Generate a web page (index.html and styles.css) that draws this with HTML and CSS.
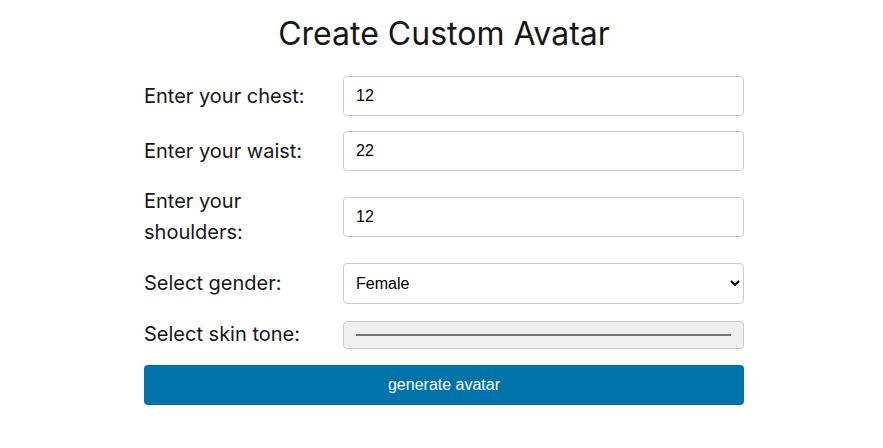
FILE: index.html
```html
<!DOCTYPE html>
<html lang="en">
<head>
    <meta charset="UTF-8">
    <meta name="viewport" content="width=device-width, initial-scale=1.0">
    <title>Create Custom Avatar</title>
    <link rel="stylesheet" href="styles.css">
</head>
<body>
    <div class="container">
        <h1>Create Custom Avatar</h1>
        <form class="avatar-form">
            <label for="chest">Enter your chest:</label>
            <input type="text" id="chest" name="chest" value="12">

            <label for="waist">Enter your waist:</label>
            <input type="text" id="waist" name="waist" value="22">

            <label for="shoulders">Enter your shoulders:</label>
            <input type="text" id="shoulders" name="shoulders" value="12">

            <label for="gender">Select gender:</label>
            <select id="gender" name="gender">
                <option value="male">Male</option>
                <option value="female" selected>Female</option>
            </select>

            <label for="skin">Select skin tone:</label>
            <input type="color" id="skin" name="skin">

            <!-- Submit -->
            <button type="submit" class="generate-btn">generate avatar</button>
        </form>
    </div>
</body>
</html>
```

FILE: styles.css
```css
body {
    font-family: Inter, "Noto Sans", sans-serif;
    background-color: #fff;
    color: #161616;
    margin: 0;
    padding: 0 0 0 5px;
}

.container {
    width: 600px;
    margin: 0 auto;
}

h1 {
    font-size: 32px;
    font-weight: 400;
    text-align: center;
    margin: 14px 0 23px;
    line-height: 39px;
}

.avatar-form {
    display: grid;
    grid-template-columns: 199px 1fr;
    row-gap: 15px;
    align-items: center;
}

.avatar-form label {
    font-size: 20px;
    line-height: 31px;
    padding-right: 12px;
}

input[type="text"],
select {
    font-family: Arial, "Liberation Sans", sans-serif;
    font-size: 16px;
    color: #000;
    padding: 10px 12px;
    border: 1px solid #ccc;
    border-radius: 4px;
    background-color: #fff;
    box-sizing: border-box;
    width: 100%;
    height: 40px;
}

select {
    height: 41px;
    padding-left: 8px;
}

input[type="color"] {
    width: 100%;
    height: 28px;
    padding: 12px;
    border: 1px solid #ccc;
    border-radius: 4px;
    background-color: #efefef;
    box-sizing: border-box;
    margin: 1px 0 0;
}

input[type="color"]::-webkit-color-swatch-wrapper {
    padding: 0;
}

input[type="color"]::-webkit-color-swatch {
    border: 1px solid #777;
}

.generate-btn {
    grid-column: 1 / span 2;
    background-color: #0073aa;
    color: #fff;
    border: none;
    border-radius: 4px;
    height: 40px;
    font-family: Arial, "Liberation Sans", sans-serif;
    font-size: 16px;
    cursor: pointer;
}
```
